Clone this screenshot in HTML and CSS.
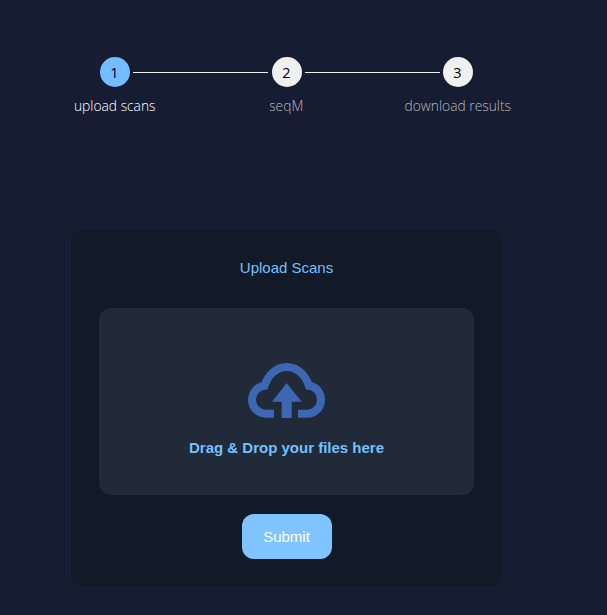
FILE: index.html
```html
<!DOCTYPE html>
<html lang="en">
<head>
<meta charset="utf-8">
<title>Upload Scans</title>
<link rel="stylesheet" href="styles.css">
</head>
<body>
<main class="page">
  <div class="stepper">
    <div class="track">
      <span class="dot dot-active">1</span>
      <span class="line"></span>
      <span class="dot">2</span>
      <span class="line line-last"></span>
      <span class="dot">3</span>
    </div>
    <div class="labels">
      <span class="label label-active">upload scans</span>
      <span class="label">seqM</span>
      <span class="label">download results</span>
    </div>
  </div>
  <section class="card">
    <h1 class="title">Upload Scans</h1>
    <div class="drop">
      <svg class="cloud" viewBox="0 0 78 55" width="78" height="55" aria-hidden="true">
        <path d="M26 50.700H18C10.300 50.700 4 44.400 4 36.700C4 29.500 9.500 23.500 16.500 22.800C20 12 28.500 4 38.700 4C49 4 57.500 12 61 22.800C68 23.500 73 29.500 73 36.700C73 44.400 66.800 50.700 59 50.700H50" fill="none" stroke="#3d66b3" stroke-width="8"/>
        <path d="M38.700 20L53.700 38.700H43.700V55H33.700V38.700H24Z" fill="#3d66b3"/>
      </svg>
      <p class="hint">Drag &amp; Drop your files here</p>
    </div>
    <button class="submit" type="button">Submit</button>
  </section>
</main>
</body>
</html>
```
FILE: styles.css
```css
* { box-sizing: border-box; }
html, body { margin: 0; height: 100%; }
body { background: #161d33; overflow: hidden; }
.page { width: 607px; height: 615px; padding-top: 57px; }
.stepper { height: 172px; }
.track { display: flex; align-items: center; padding-left: 100px; }
.dot {
  width: 30px; height: 30px; border-radius: 50%;
  background: #f0f0f0; color: #000;
  display: flex; align-items: center; justify-content: center;
  font: 400 14.500px/30px "Open Sans", sans-serif;
  padding: 2px 1px 0 0;
  flex: none;
}
.dot-active { background: #72bcff; }
.line { width: 135px; height: 1px; background: #f0f0f0; margin: 0 4px 0 3px; flex: none; }
.line-last { margin-right: 3px; }
.labels { display: grid; grid-template-columns: repeat(3, 171.500px); margin-left: 29px; margin-top: 9px; }
.label {
  text-align: center; color: #b4b6bb;
  font: 300 13.800px/20px "Open Sans", sans-serif;
}
.label-active { color: #fff; }
.card {
  width: 431px; height: 358px; margin-left: 71px;
  background: #121927; border-radius: 12px;
  padding: 29px 28px 0;
  display: flex; flex-direction: column; align-items: center;
}
.title {
  margin: 0; color: #74c0ff;
  font: 400 15px/20px "Liberation Sans", sans-serif;
}
.drop {
  width: 375px; height: 187px; margin-top: 30px;
  background: #202a38; border-radius: 12px;
  display: flex; flex-direction: column; align-items: center;
  padding-top: 55px;
}
.cloud { display: block; }
.hint {
  margin: 20px 0 0; color: #74c0ff;
  font: 700 15px/20px "Liberation Sans", sans-serif;
}
.submit {
  width: 90px; height: 45px; margin-top: 19px;
  border: 0; border-radius: 12px; background: #80c4ff; color: #fff;
  font: 400 15px/20px "Liberation Sans", sans-serif;
}
```
